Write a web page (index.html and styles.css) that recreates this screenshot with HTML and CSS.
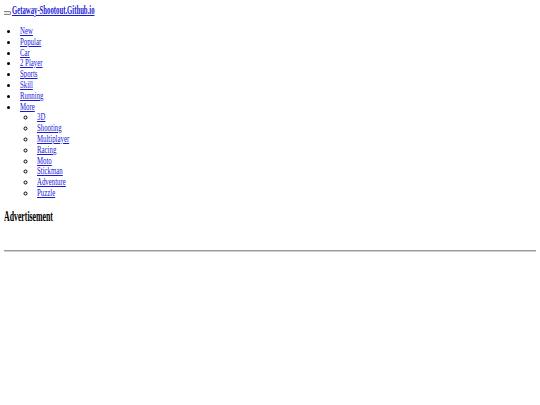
FILE: index.html
```html
<!DOCTYPE html>
<html>
<head>
<meta charset="utf-8">
<title>Getaway-Shootout.Github.io</title>
<link rel="stylesheet" href="styles.css">
</head>
<body>
<div class="header">
  <button class="menu-btn" type="button"></button>
  <a class="brand" href="#"><span class="cond-b">Getaway-Shootout.Github.io</span></a>
</div>
<ul class="nav">
  <li><a href="#"><span class="cond">New</span></a></li>
  <li><a href="#"><span class="cond">Popular</span></a></li>
  <li><a href="#"><span class="cond">Car</span></a></li>
  <li><a href="#"><span class="cond">2 Player</span></a></li>
  <li><a href="#"><span class="cond">Sports</span></a></li>
  <li><a href="#"><span class="cond">Skill</span></a></li>
  <li><a href="#"><span class="cond">Running</span></a></li>
  <li><a href="#"><span class="cond">More</span></a>
    <ul class="sub">
      <li><a href="#"><span class="cond">3D</span></a></li>
      <li><a href="#"><span class="cond">Shooting</span></a></li>
      <li><a href="#"><span class="cond">Multiplayer</span></a></li>
      <li><a href="#"><span class="cond">Racing</span></a></li>
      <li><a href="#"><span class="cond">Moto</span></a></li>
      <li><a href="#"><span class="cond">Stickman</span></a></li>
      <li><a href="#"><span class="cond">Adventure</span></a></li>
      <li><a href="#"><span class="cond">Puzzle</span></a></li>
    </ul>
  </li>
</ul>
<h3 class="ad-title"><span class="cond-h">Advertisement</span></h3>
<div class="ad-slot"></div>
<hr class="rule">
</body>
</html>
```
FILE: styles.css
```css
html, body {
  background: #fff;
}
body {
  margin: 4px;
  font-family: "Liberation Serif", "Times New Roman", serif;
  font-size: 11px;
  color: #000;
}
a {
  color: #1a1ad8;
  text-decoration: none;
}
a span {
  text-decoration: underline;
  text-decoration-thickness: 1px;
  text-underline-offset: 1px;
}
.header {
  display: flex;
  align-items: flex-end;
  height: 13px;
  gap: 1px;
}
.menu-btn {
  width: 8px;
  height: 4px;
  padding: 0;
  margin: 0 0 2px -1px;
  border: 1px solid #888;
  border-radius: 1px;
  background: #e9e9e9;
}
.brand {
  font-weight: bold;
  font-size: 12px;
  line-height: 13px;
}
.cond, .cond-b, .cond-h {
  display: inline-block;
  transform-origin: left center;
}
.cond { transform: scaleX(0.62); }
.cond-b { transform: scaleX(0.56); }
.cond-h { transform: scaleX(0.55); }
.nav {
  margin: 8px 0 0;
  padding-left: 16px;
  list-style: disc;
  font-size: 11px;
  line-height: 10.8px;
}
.sub {
  margin: 0;
  padding-left: 17px;
  list-style: circle;
}
.ad-title {
  margin: 10px 0 0;
  font-size: 14.2px;
  line-height: 16px;
}
.ad-slot {
  height: 26px;
}
.rule {
  margin: 0;
  border: 0;
  border-top: 1px solid #9a9a9a;
  border-bottom: 1px solid #d0d0d0;
}
```
